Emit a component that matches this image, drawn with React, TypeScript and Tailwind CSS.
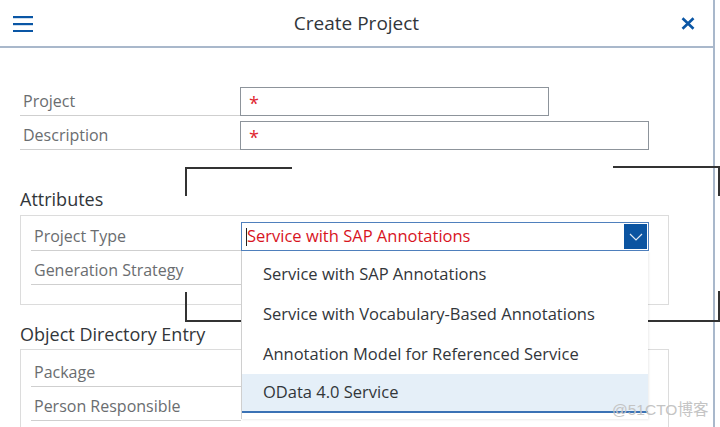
import React from 'react';

const FONT = { fontFamily: '"Open Sans", "Noto Sans", sans-serif' };

const OPTIONS = [
  'Service with SAP Annotations',
  'Service with Vocabulary-Based Annotations',
  'Annotation Model for Referenced Service',
  'OData 4.0 Service',
];

const Label = ({ text, className = '' }: { text: string; className?: string }) => (
  <div className={`w-[210px] h-full flex items-end border-b border-[#cfcfcf] ${className}`}>
    <span className="pl-[3px] pb-[3px] text-[16px] leading-[22px] text-[#6a6d70]">{text}</span>
  </div>
);

const Bracket = ({ className }: { className: string }) => (
  <div className={`absolute border-[#333] ${className}`} />
);

export default function App() {
  return (
    <div className="relative w-[720px] h-[427px] overflow-hidden bg-white" style={FONT}>
      <div className="flex h-full">
        {/* Dialog */}
        <div className="w-[715px] h-full border-r-2 border-[#a9b8cb] flex flex-col">
          {/* Header */}
          <div className="h-[48px] shrink-0 border-b-2 border-[#a9b8cb] flex items-center px-[13px]">
            <div className="w-[40px]">
              <svg width="20" height="16" viewBox="0 0 20 16" className="mt-[1px]">
                <rect x="0" y="0" width="20" height="2.2" fill="#0a56a5" />
                <rect x="0" y="7" width="20" height="2.2" fill="#0a56a5" />
                <rect x="0" y="14" width="20" height="2.2" fill="#0a56a5" />
              </svg>
            </div>
            <span className="flex-1 text-center text-[19px] text-[#32363a]">Create Project</span>
            <div className="w-[40px] flex justify-end">
              <svg width="14" height="13" viewBox="0 0 14 13" className="mr-[5px]">
                <path d="M1.5 1.2 L12.5 11.8 M12.5 1.2 L1.5 11.8" stroke="#0a56a5" strokeWidth="2.6" />
              </svg>
            </div>
          </div>

          {/* Body */}
          <div className="flex-1 pl-[20px] pt-[34px]">
            <div className="flex h-[34px]">
              <Label text="Project" className="w-[220px]" />
              <div className="self-end h-[29px] w-[309px] border border-[#8d949b] flex items-center pl-[8px]">
                <span className="text-[#e0262f] text-[18px] leading-none mt-[2px]">*</span>
              </div>
            </div>
            <div className="flex h-[34px]">
              <Label text="Description" className="w-[220px]" />
              <div className="self-end h-[29px] w-[409px] border border-[#8d949b] flex items-center pl-[8px]">
                <span className="text-[#e0262f] text-[18px] leading-none mt-[2px]">*</span>
              </div>
            </div>

            <h2 className="mt-[37px] text-[18px] leading-[24px] text-[#32363a]">Attributes</h2>
            <div className="mt-[4px] w-[649px] h-[90px] border border-[#dcdcdc] pl-[10px] pt-[1px]">
              <div className="flex h-[34px]">
                <Label text="Project Type" />
                <div className="relative self-end h-[29px] w-[408px] border border-[#4f80bd] flex items-center">
                  <span className="w-px h-[18px] bg-[#222] ml-[4px]" />
                  <span className="text-[16.5px] text-[#d8141e] flex-1">Service with SAP Annotations</span>
                  <div className="w-[23px] h-[25px] mr-[1px] bg-[#0b54a1] flex items-center justify-center">
                    <svg width="14" height="8" viewBox="0 0 14 8">
                      <path d="M1 1 L7 7 L13 1" fill="none" stroke="#dfe8f3" strokeWidth="1.2" />
                    </svg>
                  </div>
                  {/* Dropdown list */}
                  <div className="absolute left-[-1px] top-[28px] w-[407px] bg-white border-l border-[#cfcfcf] shadow-[1px_1px_2px_rgba(0,0,0,0.08)] pt-[3px] pb-[6px] z-10">
                    {OPTIONS.map((o, i) => (
                      <div
                        key={o}
                        className={`flex items-center pl-[21px] text-[16.5px] text-[#32363a] ${
                          i === OPTIONS.length - 1 ? 'bg-[#e5eff8] border-b-2 border-[#3a72b5] h-[39px]' : 'h-[40px]'
                        }`}
                      >
                        {o}
                      </div>
                    ))}
                  </div>
                </div>
              </div>
              <div className="flex h-[34px]">
                <Label text="Generation Strategy" />
              </div>
            </div>

            <h2 className="mt-[17px] text-[18px] leading-[24px] text-[#32363a]">Object Directory Entry</h2>
            <div className="mt-[3px] w-[649px] h-[120px] border border-[#dcdcdc] pl-[10px] pt-[2px]">
              <div className="flex h-[35px]">
                <Label text="Package" />
              </div>
              <div className="flex h-[34px]">
                <Label text="Person Responsible" />
              </div>
            </div>
          </div>
        </div>
        <div className="flex-1 bg-white" />
      </div>

      {/* Annotation brackets */}
      <Bracket className="left-[185px] top-[167px] w-[107px] h-[29px] border-l-2 border-t-2" />
      <Bracket className="left-[613px] top-[166px] w-[107px] h-[30px] border-r-2 border-t-2" />
      <Bracket className="left-[185px] top-[292px] w-[107px] h-[30px] border-l-2 border-b-2" />
      <Bracket className="left-[613px] top-[291px] w-[107px] h-[31px] border-r-2 border-b-2" />

      {/* Watermark */}
      <div
        className="absolute left-[612px] top-[398px] text-[15.5px] text-[#c4c4c4] z-20"
        style={{ fontFamily: '"Liberation Sans", "Noto Sans CJK SC", sans-serif' }}
      >
        @51CTO博客
      </div>
    </div>
  );
}
